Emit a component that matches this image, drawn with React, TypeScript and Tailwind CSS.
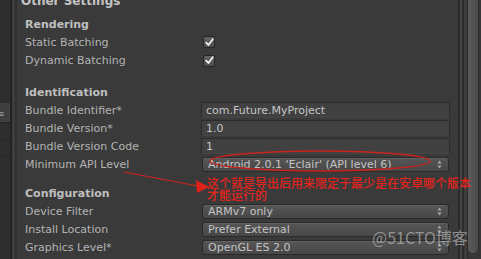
import React from "react";

const font = { fontFamily: '"DejaVu Sans", Verdana, sans-serif' };

function Label({ children }: { children: React.ReactNode }) {
  return <div className="w-[176px] shrink-0 text-[11px] text-[#b4b4b4] leading-none">{children}</div>;
}

function Row({ label, children, h = "h-[18px]" }: { label: string; children?: React.ReactNode; h?: string }) {
  return (
    <div className={`flex items-center pl-[8px] ${h}`}>
      <Label>{label}</Label>
      {children}
    </div>
  );
}

function Header({ children, h = "h-[18px]" }: { children: React.ReactNode; h?: string }) {
  return (
    <div className={`flex items-center pl-[8px] ${h} text-[11px] font-bold text-[#bfbfbf] leading-none`}>{children}</div>
  );
}

function Field({ value }: { value: string }) {
  return (
    <div className="w-[249px] h-[16px] flex items-center pl-[4px] bg-[#414141] border border-[#2b2b2b] border-b-[#454545] text-[11px] text-[#c6c6c6] leading-none">
      {value}
    </div>
  );
}

function Arrows() {
  return (
    <svg width="5" height="9" viewBox="0 0 5 9" className="shrink-0">
      <path d="M2.5 0.5 L4.5 3.5 L0.5 3.5 Z" fill="#a8a8a8" />
      <path d="M2.5 8.5 L4.5 5.5 L0.5 5.5 Z" fill="#a8a8a8" />
    </svg>
  );
}

function Dropdown({ value }: { value: string }) {
  return (
    <div className="ml-[1px] w-[247px] h-[15px] flex items-center justify-between pl-[5px] pr-[6px] rounded-[3px] border border-[#2a2a2a] bg-gradient-to-b from-[#565656] to-[#474747] text-[11px] text-[#c4c4c4] leading-none shadow-[inset_0_1px_0_#606060]">
      <span>{value}</span>
      <Arrows />
    </div>
  );
}

function Check() {
  return (
    <div className="ml-[2px] w-[12px] h-[12px] rounded-[2px] bg-gradient-to-b from-[#626262] to-[#4e4e4e] border border-[#262626] flex items-center justify-center">
      <svg width="9" height="9" viewBox="0 0 9 9">
        <path d="M1.2 4.6 L3.4 7 L7.8 1.2" stroke="#f2f2f2" strokeWidth="1.8" fill="none" strokeLinecap="round" strokeLinejoin="round" />
      </svg>
    </div>
  );
}

export default function App() {
  return (
    <div className="relative w-[481px] h-[259px] overflow-hidden flex bg-[#3a3a3a]" style={font}>
      {/* left strip */}
      <div className="w-[10px] shrink-0 bg-[#2e2e2e] flex flex-col">
        <div className="h-[103px]" />
        <div className="h-[20px] bg-[#3f3f3f] border-b border-[#262626] flex items-end">
          <span className="text-[9px] text-[#9a9a9a] leading-none ml-[-3px] mb-[3px]">≡</span>
        </div>
        <div className="h-[17px] border-b border-[#262626]" />
        <div className="h-[17px] border-b border-[#262626]" />
      </div>
      <div className="w-[2px] shrink-0 bg-[#222222]" />
      <div className="w-[3px] shrink-0 bg-[#3d3d3d]" />
      <div className="w-[2px] shrink-0 bg-[#2f2f2f]" />

      {/* main */}
      <div className="flex-1 flex flex-col mt-[-8px]">
        <div className="h-[18px] flex items-center pl-[4px] text-[12px] font-bold text-[#c4c4c4] leading-none">Other Settings</div>
        <div className="h-[5px]" />
        <Header>Rendering</Header>
        <Row label="Static Batching"><Check /></Row>
        <Row label="Dynamic Batching" h="h-[19px]"><Check /></Row>
        <div className="h-[13px]" />
        <Header>Identification</Header>
        <Row label="Bundle Identifier*"><Field value="com.Future.MyProject" /></Row>
        <Row label="Bundle Version*"><Field value="1.0" /></Row>
        <Row label="Bundle Version Code"><Field value="1" /></Row>
        <Row label="Minimum API Level"><Dropdown value="Android 2.0.1 'Eclair' (API level 6)" /></Row>
        <div className="h-[11px]" />
        <Header>Configuration</Header>
        <Row label="Device Filter"><Dropdown value="ARMv7 only" /></Row>
        <Row label="Install Location"><Dropdown value="Prefer External" /></Row>
        <Row label="Graphics Level*"><Dropdown value="OpenGL ES 2.0" /></Row>
      </div>

      {/* right edge */}
      <div className="w-[2px] shrink-0 bg-[#2a2a2a]" />
      <div className="w-[2px] shrink-0 bg-[#464646]" />
      <div className="w-[2px] shrink-0 bg-[#2c2c2c]" />
      <div className="w-[3px] shrink-0 bg-[#3c3c3c]" />
      <div className="w-[1px] shrink-0 bg-[#2a2a2a]" />
      <div className="w-[13px] shrink-0 bg-[#363636] flex flex-col">
        <div className="w-[11px] h-[253px] rounded-b-[6px] bg-gradient-to-r from-[#5a5a5a] via-[#545454] to-[#4a4a4a] border-r border-[#2d2d2d]" />
      </div>

      {/* annotations */}
      <svg className="absolute left-0 top-0 pointer-events-none" width="481" height="259">
        <ellipse cx="320" cy="161" rx="110" ry="10" fill="none" stroke="#c8231e" strokeWidth="1.4" />
        <path d="M124 172 L198 186" stroke="#d0231d" strokeWidth="1.2" fill="none" />
        <polygon points="196,180 209,187 197,193" fill="#e0201a" />
      </svg>
      <div
        className="absolute left-[207px] top-[177px] text-[12px] leading-[12px] text-[#e3231c] font-medium whitespace-nowrap"
        style={{ fontFamily: '"Noto Sans CJK SC", sans-serif' }}
      >
        <div>这个就是导出后用来限定于最少是在安卓哪个版本</div>
        <div>才能运行的</div>
      </div>
      <div
        className="absolute left-[372px] top-[229px] text-[16px] leading-none text-[#c8c8c8]/60 whitespace-nowrap"
        style={{ fontFamily: '"Noto Sans CJK SC", sans-serif' }}
      >
        @51CTO博客
      </div>
    </div>
  );
}
